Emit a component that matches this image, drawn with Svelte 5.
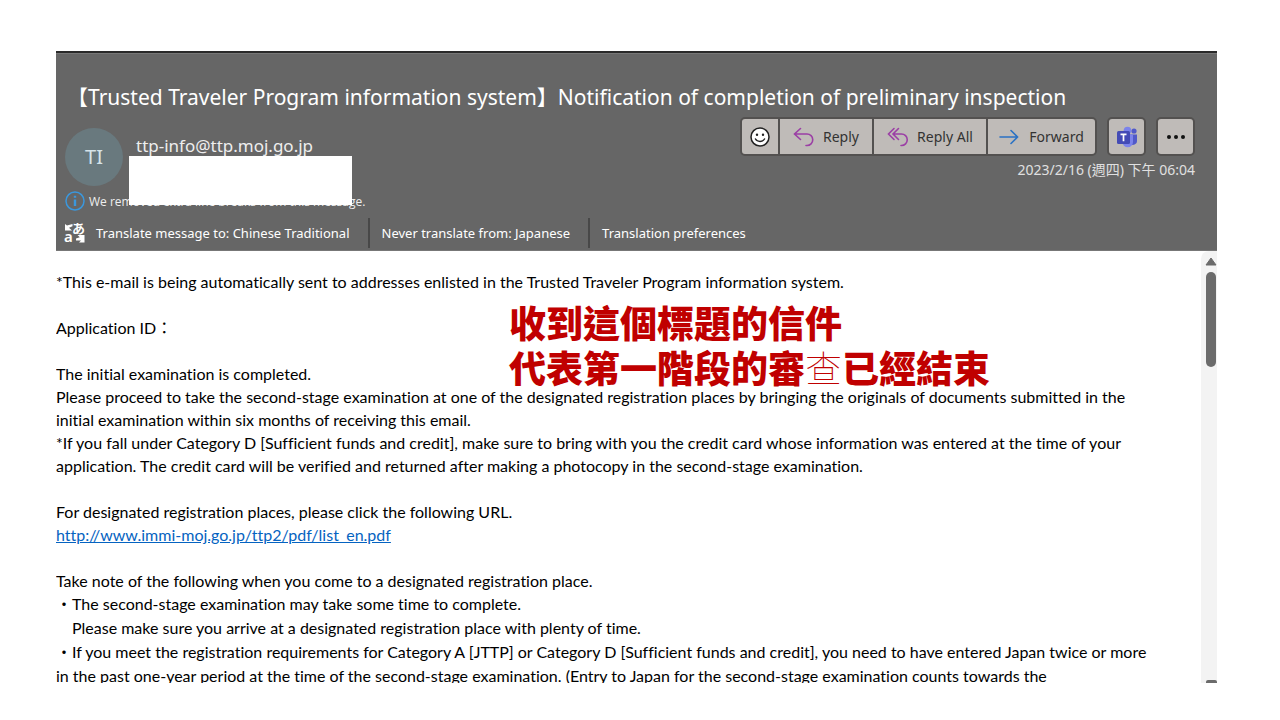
<script lang="ts">
  const actions: string[] = [
    'Translate message to: Chinese Traditional',
    'Never translate from: Japanese',
    'Translation preferences',
  ]

  const intro: string[] = [
    '*This e-mail is being automatically sent to addresses enlisted in the Trusted Traveler Program information system.',
    '',
    'Application ID：',
    '',
    'The initial examination is completed.',
    'Please proceed to take the second-stage examination at one of the designated registration places by bringing the originals of documents submitted in the',
    'initial examination within six months of receiving this email.',
    '*If you fall under Category D [Sufficient funds and credit], make sure to bring with you the credit card whose information was entered at the time of your',
    'application. The credit card will be verified and returned after making a photocopy in the second-stage examination.',
    '',
    'For designated registration places, please click the following URL.',
  ]

  const notes: string[] = [
    '・The second-stage examination may take some time to complete.',
    '　Please make sure you arrive at a designated registration place with plenty of time.',
    '・If you meet the registration requirements for Category A [JTTP] or Category D [Sufficient funds and credit], you need to have entered Japan twice or more',
    'in the past one-year period at the time of the second-stage examination. (Entry to Japan for the second-stage examination counts towards the',
  ]
</script>

<main class="page">
  <article class="mail">
    <header class="mail-header">
      <h1 class="subject">【Trusted Traveler Program information system】Notification of completion of preliminary inspection</h1>

      <div class="meta">
        <div class="avatar">TI</div>
        <div class="sender">ttp-info@ttp.moj.go.jp</div>
        <div class="side">
          <div class="toolbar">
            <div class="group">
              <button class="tool smile" aria-label="React">
                <svg width="20" height="20" viewBox="0 0 20 20" fill="none" stroke="#222" stroke-width="1.5">
                  <circle cx="10" cy="10" r="9" fill="#fff" />
                  <path d="M5.5 12c1.8 3.2 7.2 3.2 9 0" stroke-linecap="round" />
                  <circle cx="7" cy="7.7" r="1.2" fill="#222" stroke="none" />
                  <circle cx="13" cy="7.7" r="1.2" fill="#222" stroke="none" />
                </svg>
              </button>
              <button class="tool reply">
                <svg width="22" height="20" viewBox="0 0 22 20" fill="none" stroke="#9b3fa5" stroke-width="1.6" stroke-linecap="round">
                  <path d="M7.5 1.5 1.5 7l6 5.5M1.5 7H14a5.7 5.7 0 0 1 0 11.5h-1" />
                </svg>
                Reply
              </button>
              <button class="tool reply-all">
                <svg width="22" height="20" viewBox="0 0 22 20" fill="none" stroke="#9b3fa5" stroke-width="1.6" stroke-linecap="round">
                  <path d="M7 1.5 1.5 7 7 12.5M11.5 1.5 6 7l5.5 5.5M6 7h8.5a5.7 5.7 0 0 1 0 11.5H14" />
                </svg>
                Reply All
              </button>
              <button class="tool forward">
                <svg width="20" height="16" viewBox="0 0 20 16" fill="none" stroke="#2b72c4" stroke-width="1.6" stroke-linecap="round">
                  <path d="M1 8h17.5M12 1.5 18.5 8 12 14.5" />
                </svg>
                Forward
              </button>
            </div>
            <button class="tool single" aria-label="Share to Teams">
              <svg width="22" height="22" viewBox="0 0 22 22">
                <circle cx="18" cy="5" r="2.6" fill="#5059c9" />
                <path d="M14 8.5h7v6a4 4 0 0 1-7 3z" fill="#5059c9" />
                <circle cx="11.5" cy="4.5" r="3.8" fill="#7b83eb" />
                <path d="M6.5 8.5H17V16a5.2 5.2 0 0 1-10.5 0z" fill="#7b83eb" />
                <rect x="1" y="5" width="13" height="13" rx="1.5" fill="#444bb5" />
                <path d="M4.5 8.3h6M7.5 8.3v7" stroke="#fff" stroke-width="1.7" />
              </svg>
            </button>
            <button class="tool single" aria-label="More actions">
              <svg width="20" height="6" viewBox="0 0 20 6" fill="#111">
                <circle cx="3" cy="3" r="2" />
                <circle cx="10" cy="3" r="2" />
                <circle cx="17" cy="3" r="2" />
              </svg>
            </button>
          </div>
          <time class="date" datetime="2023-02-16T18:04">2023/2/16 (週四) 下午 06:04</time>
        </div>
      </div>

      <div class="info">
        <svg width="20" height="20" viewBox="0 0 20 20" fill="none" stroke="#3b97dc" stroke-width="1.5">
          <circle cx="10" cy="10" r="9" />
          <path d="M10 8.5V15M10 4.8v2" stroke-width="2.4" />
        </svg>
        <span>We removed extra line breaks from this message.</span>
        <div class="redaction"></div>
      </div>

      <div class="translate">
        <svg class="translate-icon" width="22" height="22" viewBox="0 0 22 22" fill="#fff">
          <path d="M1 2l2 1.6L8.5 2v2.2L5 5.8 8 8.5H1z" />
          <path d="M20.5 20.5V13h-7l2.3 2.2-3.8 1.2v2h5l-2 2.1z" />
          <text x="0" y="20" class="glyph-a">a</text>
          <text x="8" y="11" class="glyph-ja">あ</text>
        </svg>
        {#each actions as action}
          <button class="translate-action">{action}</button>
        {/each}
      </div>
    </header>

    <div class="content">
      <div class="body">
        {#each intro as line}
          <p>{line}</p>
        {/each}
        <p><a href="http://www.immi-moj.go.jp/ttp2/pdf/list_en.pdf">http://www.immi-moj.go.jp/ttp2/pdf/list_en.pdf</a></p>
        <p></p>
        <p>Take note of the following when you come to a designated registration place.</p>
        <div class="notes">
          {#each notes as line}
            <p>{line}</p>
          {/each}
        </div>
      </div>
      <div class="scrollbar">
        <svg width="12" height="9" viewBox="0 0 12 9" fill="#6b6b6b" stroke="#6b6b6b" stroke-linejoin="round">
          <path d="M6 1 11 8H1z" />
        </svg>
        <div class="thumb"></div>
        <div class="down"></div>
      </div>

      <div class="annotation">
        收到這個標題的信件<br />代表第一階段的審<span>查</span>已經結束
      </div>
    </div>
  </article>
</main>

<style>
  :global(body) {
    background: #fff;
  }

  .page {
    box-sizing: border-box;
    height: 100vh;
    padding: 51px 63px 37px 56px;
    font-family: 'Noto Sans', 'Noto Sans CJK TC', sans-serif;
  }

  .mail {
    display: flex;
    flex-direction: column;
    height: 100%;
    overflow: hidden;
  }

  .mail-header {
    flex-shrink: 0;
    border-top: 2px solid #292929;
    border-bottom: 1px solid #777;
    box-shadow: inset 0 1px #777;
    background: #666;
    color: #fff;
  }

  .subject {
    margin: 28px 0 0 11px;
    font-size: 21px;
    line-height: 32px;
    font-weight: 400;
    white-space: nowrap;
  }

  .meta {
    display: flex;
    height: 72px;
    padding: 4px 22px 0 9px;
  }

  .avatar {
    width: 58px;
    height: 58px;
    margin-top: 11px;
    border-radius: 50%;
    background: #69797e;
    color: #d5e3e8;
    font-size: 20px;
    line-height: 58px;
    text-align: center;
  }

  .sender {
    flex: 1;
    padding: 16px 0 0 13px;
    font-size: 17px;
    line-height: 26px;
    color: #eee;
  }

  .side {
    text-align: right;
  }

  .toolbar {
    display: flex;
    gap: 10px;
  }

  .group {
    display: flex;
  }

  .tool {
    box-sizing: border-box;
    display: flex;
    align-items: center;
    justify-content: center;
    height: 39px;
    margin: 0;
    padding: 0;
    border: 2px solid #535150;
    background: #bfbbb8;
    color: #333;
    font-family: inherit;
    font-size: 14px;
    white-space: nowrap;
  }

  .group .tool + .tool {
    margin-left: -2px;
  }

  .smile {
    width: 40px;
    border-radius: 5px 0 0 5px;
  }

  .reply {
    width: 96px;
    gap: 8px;
  }

  .reply-all {
    width: 116px;
    gap: 8px;
  }

  .forward {
    width: 111px;
    gap: 10px;
    border-radius: 0 5px 5px 0;
  }

  .single {
    width: 39px;
    border-radius: 5px;
  }

  .date {
    display: block;
    margin-top: 4px;
    font-size: 14px;
    line-height: 20px;
    color: #e0e0e0;
  }

  .info {
    position: relative;
    display: flex;
    align-items: center;
    gap: 4px;
    height: 24px;
    padding-left: 9px;
    font-family: 'Open Sans', sans-serif;
    font-size: 12px;
    color: #eee;
  }

  .redaction {
    position: absolute;
    left: 73px;
    bottom: 8px;
    width: 223px;
    height: 49px;
    background: #fff;
  }

  .translate {
    display: flex;
    align-items: center;
    height: 35px;
    padding: 2px 0 0 8px;
  }

  .translate-icon {
    margin-right: 10px;
    overflow: visible;
  }

  .glyph-a {
    font-size: 15px;
    font-weight: 600;
  }

  .glyph-ja {
    font-size: 13px;
    font-weight: 700;
  }

  .translate-action {
    height: 30px;
    margin: 0;
    padding: 0;
    border: none;
    background: none;
    color: #fff;
    font-family: inherit;
    font-size: 13px;
    white-space: nowrap;
  }

  .translate-action + .translate-action {
    margin-left: 18px;
    padding-left: 12px;
    border-left: 2px solid #484848;
  }

  .content {
    position: relative;
    display: flex;
    flex: 1;
    min-height: 0;
  }

  .body {
    flex: 1;
    min-width: 0;
    padding-top: 19px;
    overflow: hidden;
    font-family: Lato, 'Noto Sans CJK TC', sans-serif;
    font-size: 16px;
    font-variant-ligatures: none;
    line-height: 23px;
    color: #000;
    white-space: nowrap;
  }

  .body p {
    height: 23px;
    margin: 0;
  }

  .body .notes p {
    height: 24px;
    line-height: 24px;
  }

  .body a {
    color: #0563c1;
  }

  .scrollbar {
    display: flex;
    flex-direction: column;
    align-items: flex-end;
    width: 16px;
    padding-top: 6px;
    border-radius: 8px 0 0 0;
    background: #f3f3f3;
  }

  .thumb {
    width: 10px;
    height: 95px;
    margin: 6px 1px 0 0;
    border-radius: 5px;
    background: #6b6b6b;
  }

  .down {
    width: 11px;
    height: 3px;
    margin-top: auto;
    border-radius: 2px 2px 0 0;
    background: #6b6b6b;
  }

  .annotation {
    position: absolute;
    left: 453px;
    top: 49px;
    font-family: 'Noto Sans CJK TC', sans-serif;
    font-size: 37px;
    font-weight: 900;
    line-height: 45px;
    color: #c00000;
    white-space: nowrap;
  }

  .annotation span {
    font-weight: 100;
  }
</style>
